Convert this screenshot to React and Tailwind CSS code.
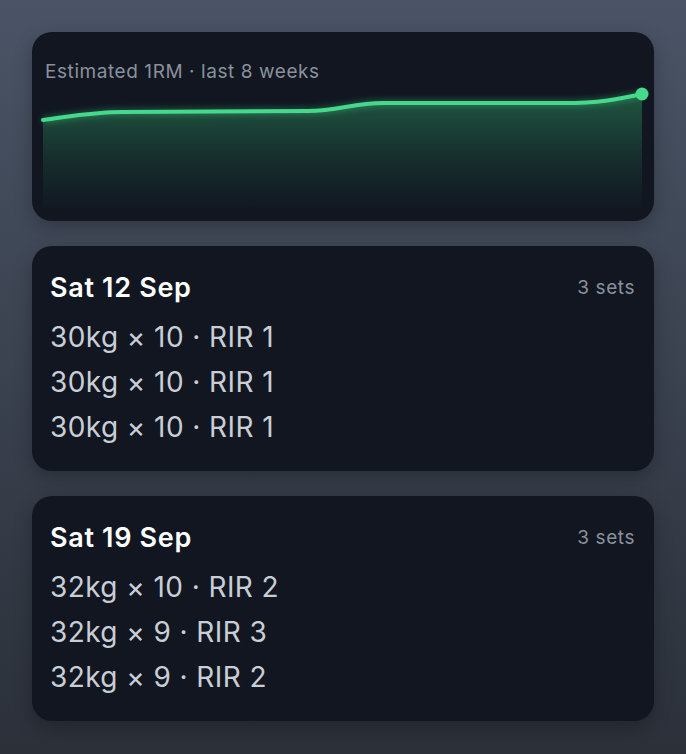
import React from 'react'

const sessions = [
  {
    date: 'Sat 12 Sep',
    sets: ['30kg × 10 · RIR 1', '30kg × 10 · RIR 1', '30kg × 10 · RIR 1'],
  },
  {
    date: 'Sat 19 Sep',
    sets: ['32kg × 10 · RIR 2', '32kg × 9 · RIR 3', '32kg × 9 · RIR 2'],
  },
]

const linePath =
  'M0 36 C 30 32, 50 28, 80 28 L 265 27 C 295 27, 310 19, 340 19 L 520 19 C 560 19, 580 14, 599 10'

const TrendCard = () => {
  return (
    <div className="rounded-[20px] bg-[#111620] shadow-[0_6px_18px_rgba(0,0,0,0.25)] pt-[28px] pb-[9px] px-[11px]">
      <p className="text-[19px] leading-[24px] tracking-[0.03em] text-[#8a919c] px-[2px]">Estimated 1RM · last 8 weeks</p>
      <svg width="599" height="128" viewBox="0 0 599 128" className="block overflow-visible">
        <defs>
          <linearGradient id="fill" x1="0" y1="0" x2="0" y2="1">
            <stop offset="0%" stopColor="#3ddc84" stopOpacity="0.32" />
            <stop offset="55%" stopColor="#3ddc84" stopOpacity="0.12" />
            <stop offset="100%" stopColor="#3ddc84" stopOpacity="0" />
          </linearGradient>
          <filter id="glow" x="-10%" y="-200%" width="120%" height="500%">
            <feGaussianBlur stdDeviation="3" />
          </filter>
        </defs>
        <path d={linePath + ' L 599 128 L 0 128 Z'} fill="url(#fill)" />
        <path d={linePath} fill="none" stroke="#45d98c" strokeWidth="6" strokeOpacity="0.35" filter="url(#glow)" />
        <path d={linePath} fill="none" stroke="#45d98c" strokeWidth="4" strokeLinecap="round" />
        <circle cx="599" cy="10" r="6.5" fill="#45d98c" />
      </svg>
    </div>
  )
}

const SessionCard = ({ date, sets }) => {
  return (
    <div className="rounded-[20px] bg-[#111620] shadow-[0_6px_18px_rgba(0,0,0,0.25)] pt-[24px] pb-[21px] pl-[18px] pr-[19px]">
      <div className="flex items-center justify-between h-[36px]">
        <h3 className="text-[27px] font-semibold tracking-[0.025em] text-white">{date}</h3>
        <span className="text-[19px] tracking-[0.03em] text-[#8a919c]">{sets.length} sets</span>
      </div>
      <div className="mt-[9px]">
        {sets.map((s, i) => (
          <p key={i} className="text-[28px] leading-[45px] tracking-[0.015em] text-[#c9ced6]">{s}</p>
        ))}
      </div>
    </div>
  )
}

export default function App() {
  return (
    <div
      className="min-h-screen bg-gradient-to-b from-[#4a5466] to-[#2b3039] px-[32px] pt-[32px] pb-[33px] flex flex-col gap-[25px]"
      style={{ fontFamily: 'Inter, "Noto Sans", sans-serif' }}
    >
      <TrendCard />
      {sessions.map((s) => (
        <SessionCard key={s.date} date={s.date} sets={s.sets} />
      ))}
    </div>
  )
}
